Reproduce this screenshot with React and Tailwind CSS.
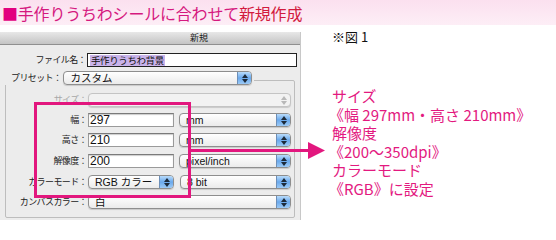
import React from "react";

const jp = { fontFamily: '"Noto Sans CJK JP", "Noto Sans", sans-serif' };
const lat = { fontFamily: '"Liberation Sans", "Noto Sans CJK JP", sans-serif' };

function Arrows({ disabled }) {
  return (
    <div
      className={
        "w-[14px] h-full flex flex-col items-center justify-center gap-[1px] rounded-r-[3px] border-l " +
        (disabled
          ? "bg-transparent border-transparent"
          : "bg-gradient-to-b from-[#b9dcfb] via-[#6aa9ec] to-[#9ccaf6] border-[#6d8fb8]")
      }
    >
      <svg width="6" height="4" viewBox="0 0 6 4">
        <path d="M3 0 L6 4 L0 4 Z" fill={disabled ? "#b8b8b8" : "#1c2a3a"} />
      </svg>
      <svg width="6" height="4" viewBox="0 0 6 4">
        <path d="M0 0 L6 0 L3 4 Z" fill={disabled ? "#b8b8b8" : "#1c2a3a"} />
      </svg>
    </div>
  );
}

function Select({ w, text, disabled }) {
  return (
    <div
      className={
        "h-[14px] flex items-center rounded-[4px] border shadow-[0_1px_1px_rgba(0,0,0,0.15)] " +
        (disabled
          ? "border-[#c4c4c4] bg-[#f2f2f2]"
          : "border-[#8e8e8e] bg-gradient-to-b from-white to-[#ebebeb]")
      }
      style={{ width: w }}
    >
      <div
        className="flex-1 pl-[6px] text-[10.5px] leading-[12px] text-[#111] whitespace-nowrap overflow-hidden"
        style={lat}
      >
        {text}
      </div>
      <Arrows disabled={disabled} />
    </div>
  );
}

function Input({ w, text }) {
  return (
    <div
      className="h-[14px] flex items-center bg-white border border-[#9a9a9a] border-t-[#7a7a7a] shadow-[inset_0_1px_1px_rgba(0,0,0,0.2)] pl-[1px] text-[12px] leading-[12px] text-[#111]"
      style={{ width: w, ...lat }}
    >
      {text}
    </div>
  );
}

function Row({ label, gray, children, className = "" }) {
  return (
    <div className={"flex items-center h-[14px] " + className}>
      <div
        className={
          "w-[82px] text-right pr-[1px] text-[9px] leading-[12px] tracking-[-0.6px] whitespace-nowrap " +
          (gray ? "text-[#a8a8a8]" : "text-[#222]")
        }
      >
        {label}
      </div>
      <div className="flex items-center">{children}</div>
    </div>
  );
}

export default function App() {
  return (
    <div className="relative w-[556px] h-[240px] bg-white overflow-hidden" style={jp}>
      <div className="h-[25px] bg-gradient-to-b from-[#fbe0ef] to-[#fdeef6] flex items-center pl-[2px]">
        <span className="text-[16px] leading-none tracking-[-0.2px]">
          <span className="text-[#e2007f]">■</span>
          <span className="text-[#d5197f]">手作りうちわシールに合わせて</span>
          <span className="text-[#d21a3e]">新規作成</span>
        </span>
      </div>

      <div className="flex">
        <div className="mt-[7px] w-[301px] h-[188px] flex flex-col border-r border-[#c8c8c8] bg-[#ececec]">
          <div className="h-[13px] shrink-0 bg-gradient-to-b from-[#e8e8e8] to-[#c4c4c4] border-b border-[#8f8f8f] relative">
            <div className="absolute left-[190px] top-[0px] text-[9px] leading-[12px] text-[#222]">新規</div>
          </div>
          <div className="flex items-center mt-[8px] h-[14px]">
            <div className="w-[87px] text-right pr-[1px] text-[9px] leading-[12px] tracking-[-0.6px] text-[#222]">
              ファイル名：
            </div>
            <div className="w-[210px] h-[14px] bg-white border border-[#222] flex items-center pl-[2px]">
              <span className="bg-[#c9b3ea] text-[9.5px] leading-[11px] text-[#111] px-[1px] tracking-[-0.4px]">
                手作りうちわ背景
              </span>
            </div>
          </div>
          <div className="relative mt-[13px] ml-[5px] mr-[5px] flex-1 border border-[#bdbdbd] rounded-[2px] mb-[2px]">
            <div className="absolute -top-[10px] -left-[1px] flex items-center bg-[#ececec] pr-[2px]">
              <div className="pl-[6px] pr-[2px] text-[9px] leading-[12px] tracking-[-0.6px] text-[#222]">
                プリセット：
              </div>
              <Select w={189} text="カスタム" />
            </div>
            <div className="flex flex-col pt-[12px]">
              <Row label="サイズ：" gray>
                <Select w={203} text="" disabled />
              </Row>
              <Row label="幅：" className="mt-[6px]">
                <Input w={86} text="297" />
                <div className="w-[5px]" />
                <Select w={112} text="mm" />
              </Row>
              <Row label="高さ：" className="mt-[6px]">
                <Input w={86} text="210" />
                <div className="w-[5px]" />
                <Select w={112} text="mm" />
              </Row>
              <Row label="解像度：" className="mt-[7px]">
                <Input w={86} text="200" />
                <div className="w-[5px]" />
                <Select w={112} text="pixel/inch" />
              </Row>
              <Row label="カラーモード：" className="mt-[7px]">
                <Select w={86} text="RGB カラー" />
                <div className="w-[6px]" />
                <Select w={111} text="8 bit" />
              </Row>
              <Row label="カンバスカラー：" className="mt-[6px]">
                <Select w={203} text="白" />
              </Row>
            </div>
          </div>
        </div>

        <div className="pl-[31px] pt-[4px]">
          <div className="text-[13px] leading-[15px] text-[#111]">※図 1</div>
          <div className="mt-[43px] text-[15px] leading-[18.5px] text-[#e3197f]">
            <div>サイズ</div>
            <div className="-ml-[3px]">《幅 297mm・高さ 210mm》</div>
            <div>解像度</div>
            <div className="-ml-[3px]">《200〜350dpi》</div>
            <div>カラーモード</div>
            <div className="-ml-[3px]">《RGB》に設定</div>
          </div>
        </div>
      </div>

      <div className="absolute left-[34px] top-[102px] w-[157px] h-[96px] border-[3px] border-[#e2177e]" />
      <svg className="absolute left-0 top-0" width="556" height="240">
        <rect x="190" y="149" width="120" height="3" fill="#e2177e" />
        <path d="M308 142 L325 150.5 L308 159 Z" fill="#e2177e" />
      </svg>
    </div>
  );
}
